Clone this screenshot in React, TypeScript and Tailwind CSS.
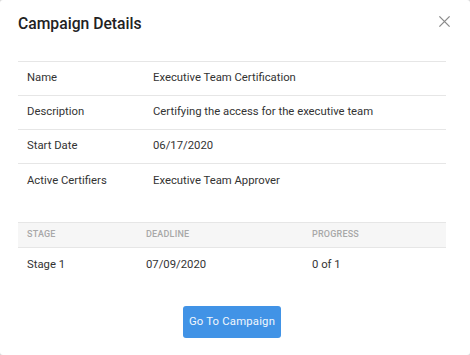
import React from "react";

const rows = [
  ["Name", "Executive Team Certification"],
  ["Description", "Certifying the access for the executive team"],
  ["Start Date", "06/17/2020"],
  ["Active Certifiers", "Executive Team Approver"],
];

export default function App() {
  return (
    <div className="w-[470px] h-[355px] bg-[#d9d9d9]" style={{ fontFamily: "Roboto, 'Noto Sans', sans-serif" }}>
      <div className="w-full h-full bg-white rounded-[3px] flex flex-col text-[#333]">
        <div className="flex items-start justify-between pl-[18px] pr-[18px] pt-[13px]">
          <h1 className="text-[15.7px] leading-[22px] font-medium text-[#222]">Campaign Details</h1>
          <button className="mt-[2px] mr-[1px] text-[#8a8a8a]" aria-label="Close">
            <svg width="13" height="13" viewBox="0 0 14 14" fill="none" stroke="currentColor" strokeWidth="1.4">
              <path d="M1.5 1.5 L12.5 12.5 M12.5 1.5 L1.5 12.5" />
            </svg>
          </button>
        </div>
        <div className="ml-[18px] mr-[24px] mt-[26px] border-t border-[#e6e6e6]">
          {rows.map(([k, v], i) => (
            <div
              key={k}
              className={`flex items-center h-[34px] text-[11.3px] ${i < rows.length - 1 ? "border-b border-[#e6e6e6]" : ""}`}
            >
              <div className="w-[135px] pl-[9px]">{k}</div>
              <div>{v}</div>
            </div>
          ))}
        </div>
        <div className="ml-[18px] mr-[24px] mt-[24px]">
          <div className="flex items-center h-[26px] bg-[#f6f6f6] border-t border-b border-[#e6e6e6] text-[9px] font-medium tracking-[0.2px] text-[#a8a8a8]">
            <div className="w-[128px] pl-[9px]">STAGE</div>
            <div className="w-[166px]">DEADLINE</div>
            <div>PROGRESS</div>
          </div>
          <div className="flex items-center h-[34px] text-[11.3px]">
            <div className="w-[128px] pl-[9px]">Stage 1</div>
            <div className="w-[166px]">07/09/2020</div>
            <div>0 of 1</div>
          </div>
        </div>
        <div className="flex justify-center ml-[18px] mr-[24px] mt-[24px]">
          <button className="h-[32px] w-[98px] bg-[#4193e6] text-[#f2f7fd] text-[11.3px] rounded-[3px] tracking-[0.2px] whitespace-nowrap">
            Go To Campaign
          </button>
        </div>
      </div>
    </div>
  );
}
